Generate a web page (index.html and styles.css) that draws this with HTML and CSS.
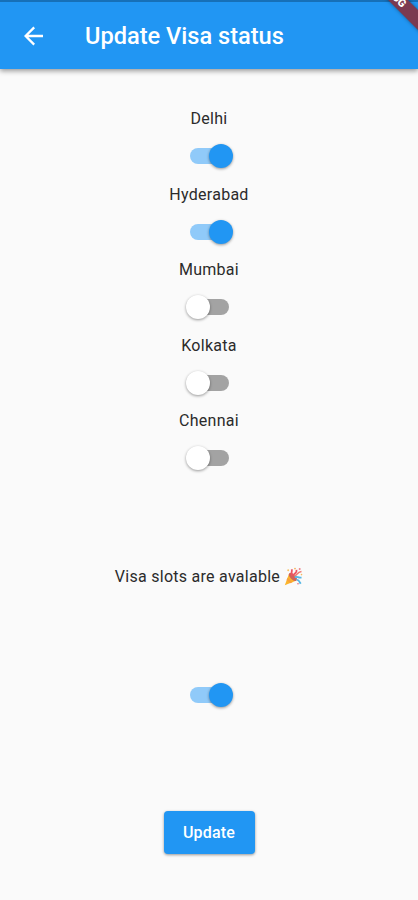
FILE: index.html
```html
<!DOCTYPE html>
<html lang="en">
<head>
    <meta charset="UTF-8">
    <meta name="viewport" content="width=device-width, initial-scale=1.0">
    <title>Update Visa status</title>
    <link rel="stylesheet" href="styles.css">
</head>
<body>

    <header>
        <button type="button" class="back" aria-label="Back">
            <svg width="20" height="20" viewBox="0 0 20 20">
                <path d="M19 10H2.2M10.2 1.4L1.6 10l8.6 8.6" fill="none" stroke="#fff" stroke-width="2.3"/>
            </svg>
        </button>
        <h1>Update Visa status</h1>
        <div class="corner"><div class="banner">BUG</div></div>
    </header>

    <main>
        <div class="cities">
            <label class="city">Delhi <input type="checkbox" class="switch" checked></label>
            <label class="city">Hyderabad <input type="checkbox" class="switch" checked></label>
            <label class="city">Mumbai <input type="checkbox" class="switch"></label>
            <label class="city">Kolkata <input type="checkbox" class="switch"></label>
            <label class="city">Chennai <input type="checkbox" class="switch"></label>
        </div>

        <p class="message">
            Visa slots are avalable
            <svg class="party" width="19" height="19" viewBox="0 0 19 19">
                <path d="M5.2 6.2L.8 18.2l11.7-4.7z" fill="#fbb52b"/>
                <path d="M3.6 10.8l4.9 4.5-2.3.9-3.7-3.3z" fill="#f9a03a"/>
                <ellipse cx="8.9" cy="9.9" rx="2.5" ry="5" transform="rotate(-45 8.9 9.9)" fill="#d0625a"/>
                <path d="M8.2 8.8c-2-3 .4-3.4-.5-6.5M9.5 8.4c.5-3 3.8-1.5 3-5.5" fill="none" stroke="#ed5361" stroke-width="1.8"/>
                <path d="M10.5 9c2.5-.6 2.5-4.2 7-4.6" fill="none" stroke="#f07b72" stroke-width="1.5"/>
                <path d="M10.8 10.5c2.5-2 3.2 1 6.7-.1M12.5 13c2-.8 2.6 1 4.2 3.8" fill="none" stroke="#55b7e5" stroke-width="1.8"/>
                <circle cx="4.2" cy="3.2" r="1" fill="#f7c46a"/>
                <circle cx="11" cy="1.6" r=".9" fill="#f4b05d"/>
                <circle cx="15.7" cy="2.1" r="1" fill="#ee8189"/>
                <circle cx="17.5" cy="7.6" r=".8" fill="#f5b95e"/>
                <circle cx="14" cy="16.8" r=".8" fill="#ed6874"/>
            </svg>
        </p>

        <input type="checkbox" class="switch" aria-label="Visa slots" checked>

        <button type="button" class="update">Update</button>
    </main>

</body>
</html>
```
FILE: styles.css
```css
* {
    box-sizing: border-box;
}

body {
    font-family: Roboto, sans-serif;
    background-color: #fafafa;
    margin: 0;
    height: 900px;
    color: #2b2b2b;
}

header {
    position: relative;
    display: flex;
    align-items: center;
    height: 69px;
    padding: 1px 0 0 24px;
    background-color: #2196f3;
    border-top: 2px solid #1670b8;
    box-shadow: 0 2px 5px rgba(0, 0, 0, 0.4);
}

h1 {
    margin: 0 0 0 41px;
    font-size: 23.6px;
    font-weight: 500;
    color: #fff;
}

.back {
    display: flex;
    padding: 0;
    border: none;
    background: none;
}

/* corner ribbon */
.corner {
    position: absolute;
    top: -2px;
    right: 0;
    width: 60px;
    height: 60px;
    overflow: hidden;
}

.banner {
    position: absolute;
    top: 4px;
    right: -41px;
    width: 100px;
    height: 14px;
    padding-right: 36px;
    background-color: #7b3a50;
    color: #fff;
    font-size: 11px;
    font-weight: 900;
    line-height: 14px;
    text-align: center;
    transform: rotate(45deg);
    box-shadow: 0 0 4px rgba(0, 0, 0, 0.4);
}

main {
    display: flex;
    flex-direction: column;
    align-items: center;
}

.cities {
    width: 100px;
    padding-top: 40px;
}

.city {
    display: flex;
    flex-direction: column;
    align-items: center;
    gap: 19px;
    height: 75.6px;
    font-size: 16px;
    line-height: 20px;
    letter-spacing: 0.27px;
}

.switch {
    appearance: none;
    position: relative;
    width: 39px;
    height: 16px;
    margin: 0;
    border-radius: 8px;
    background-color: #a3a3a3;
}

.switch::before {
    content: "";
    position: absolute;
    top: -4px;
    left: -4px;
    width: 24px;
    height: 24px;
    border-radius: 50%;
    background-color: #fff;
    box-shadow: 0 1px 3px rgba(0, 0, 0, 0.4);
}

.switch:checked {
    background-color: #90caf9;
}

.switch:checked::before {
    left: 19px;
    background-color: #2196f3;
}

.message {
    display: flex;
    align-items: center;
    gap: 4px;
    margin: 80px 0 100px;
    font-size: 16px;
    line-height: 20px;
    letter-spacing: 0.27px;
}

.update {
    width: 91px;
    height: 43px;
    margin-top: 108px;
    padding: 0;
    border: none;
    border-radius: 4px;
    background-color: #2196f3;
    color: #fff;
    font-family: inherit;
    font-size: 16px;
    font-weight: 500;
    letter-spacing: 0.2px;
    box-shadow: 0 1px 3px rgba(0, 0, 0, 0.4);
}
```
